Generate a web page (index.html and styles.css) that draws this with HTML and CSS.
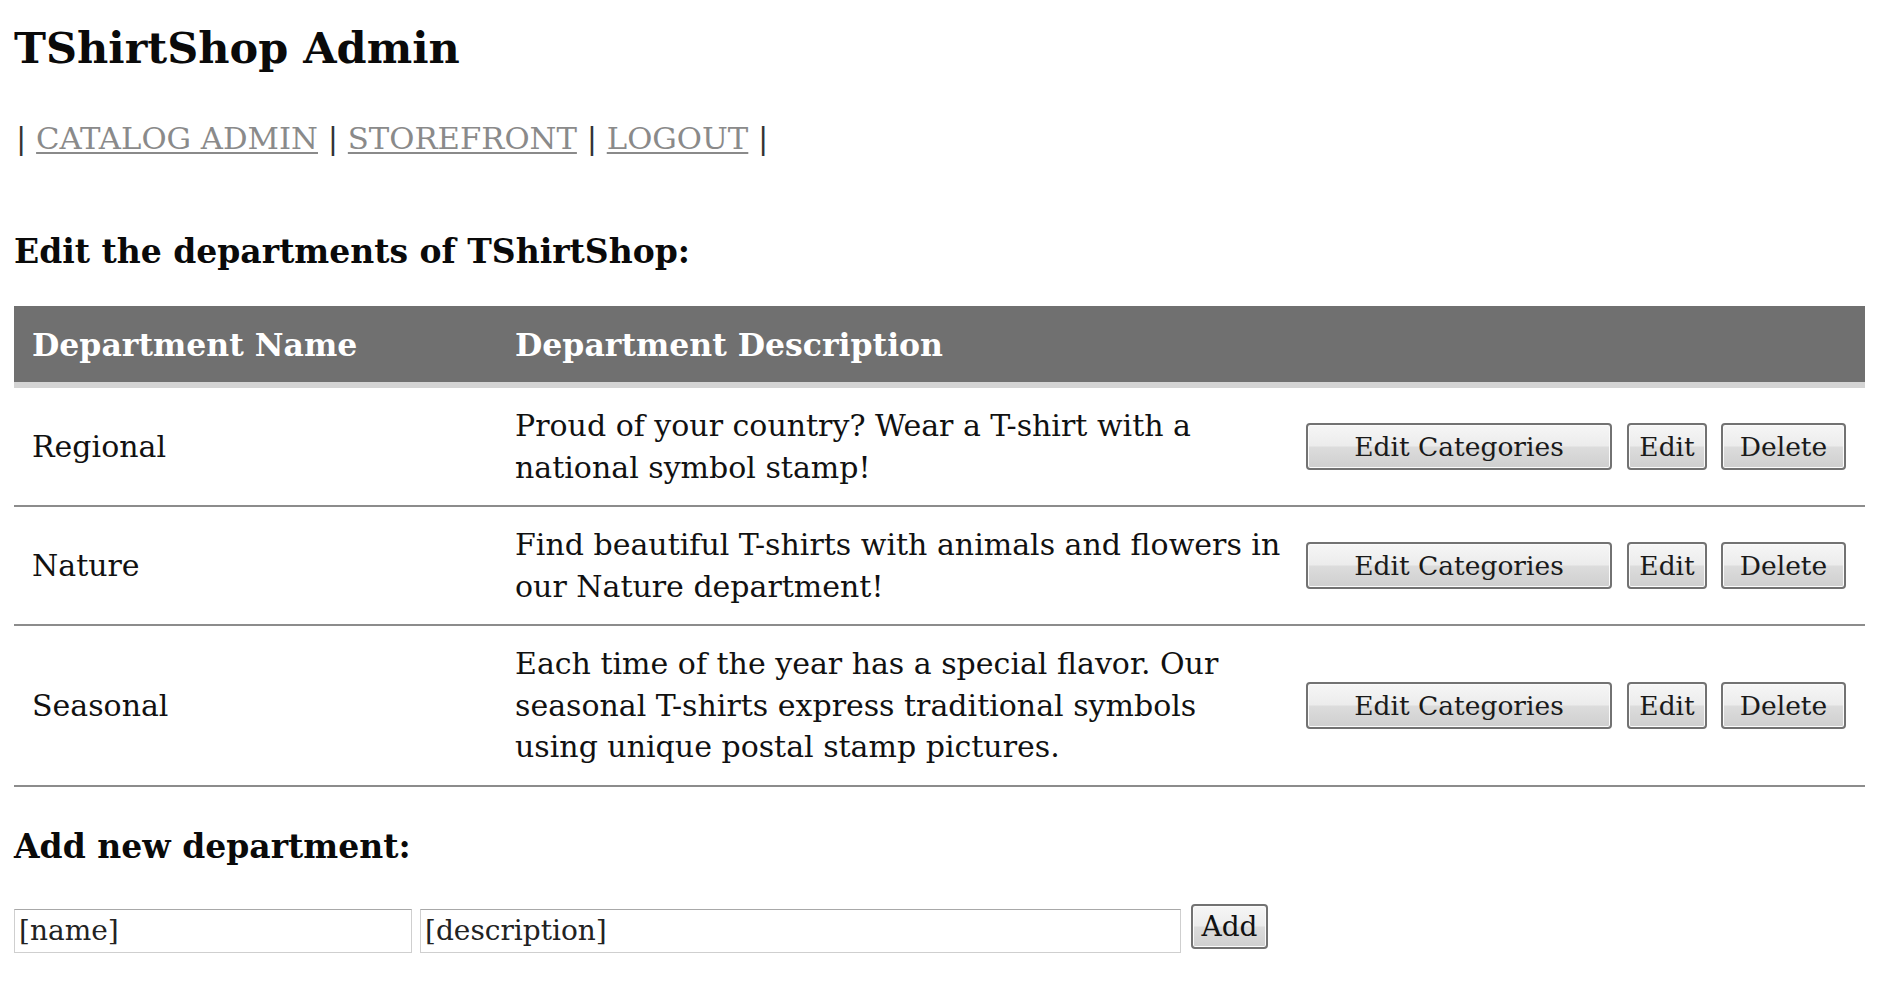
FILE: index.html
```html
<!DOCTYPE html>
<html>
<head>
<meta charset="utf-8">
<title>TShirtShop Admin</title>
<link rel="stylesheet" href="styles.css">
</head>
<body>
<h1 class="title">TShirtShop Admin</h1>
<p class="nav">| <a href="#">CATALOG ADMIN</a> | <a href="#">STOREFRONT</a> | <a href="#">LOGOUT</a> |</p>
<h2 class="section">Edit the departments of TShirtShop:</h2>
<table class="grid">
  <thead>
    <tr>
      <th class="c-name">Department Name</th>
      <th class="c-desc">Department Description</th>
      <th class="c-act"></th>
    </tr>
  </thead>
  <tbody>
    <tr>
      <td class="c-name">Regional</td>
      <td class="c-desc">Proud of your country? Wear a T-shirt with a national symbol stamp!</td>
      <td class="c-act"><button class="btn btn-cat">Edit Categories</button><button class="btn btn-edit">Edit</button><button class="btn btn-del">Delete</button></td>
    </tr>
    <tr>
      <td class="c-name">Nature</td>
      <td class="c-desc">Find beautiful T-shirts with animals and flowers in our Nature department!</td>
      <td class="c-act"><button class="btn btn-cat">Edit Categories</button><button class="btn btn-edit">Edit</button><button class="btn btn-del">Delete</button></td>
    </tr>
    <tr>
      <td class="c-name">Seasonal</td>
      <td class="c-desc">Each time of the year has a special flavor. Our seasonal T-shirts express traditional symbols using unique postal stamp pictures.</td>
      <td class="c-act"><button class="btn btn-cat">Edit Categories</button><button class="btn btn-edit">Edit</button><button class="btn btn-del">Delete</button></td>
    </tr>
  </tbody>
</table>
<h2 class="section add-title">Add new department:</h2>
<form class="add-form">
  <input class="field field-name" type="text" value="[name]">
  <input class="field field-desc" type="text" value="[description]">
  <button class="btn btn-add" type="button">Add</button>
</form>
</body>
</html>
```
FILE: styles.css
```css
html, body {
  background: #ffffff;
}
body {
  margin: 0;
  padding: 24px 19px 0 14px;
  font-family: "DejaVu Serif", "Liberation Serif", serif;
  font-size: 30px;
  line-height: 41.5px;
  color: #111111;
}
.title {
  margin: 0;
  font-size: 43px;
  line-height: 48px;
  font-weight: bold;
  color: #0a0a0a;
}
.nav {
  margin: 46px 0 0 2px;
  font-size: 30.7px;
  line-height: 41px;
  color: #333333;
}
.nav a {
  color: #8a8a8a;
  text-decoration: underline;
  text-decoration-thickness: 2px;
  text-underline-offset: 3px;
}
.section {
  margin: 72px 0 0 0;
  font-size: 33px;
  line-height: 41px;
  font-weight: bold;
  color: #0a0a0a;
}
.grid {
  margin-top: 34px;
  width: 1851px;
  border-collapse: collapse;
  table-layout: fixed;
}
.grid th {
  background: #707070;
  color: #ffffff;
  font-size: 31.5px;
  font-weight: bold;
  text-align: left;
  padding: 18px 18px 17px 18px;
  line-height: 41px;
  border-bottom: 6px solid #d4d4d4;
}
.grid td {
  padding: 17px 18px 17px 18px;
  vertical-align: middle;
  border-bottom: 2px solid #8c8c8c;
}
.c-name {
  width: 447px;
}
.c-desc {
  width: 768px;
}
.grid td.c-act {
  text-align: right;
  padding-left: 0;
  padding-right: 19px;
  white-space: nowrap;
}
.btn {
  font-family: "DejaVu Serif", "Liberation Serif", serif;
  font-size: 26.5px;
  color: #1a1a1a;
  height: 47px;
  padding: 0;
  border: 2px solid #727272;
  border-radius: 4px;
  background: linear-gradient(to bottom, #f6f6f6 0%, #ececec 48%, #dcdcdc 52%, #cfcfcf 100%);
  box-shadow: inset 0 0 0 1px #fbfbfb;
  vertical-align: middle;
}
.btn-cat {
  width: 306px;
}
.btn-edit {
  width: 80px;
  margin-left: 15px;
}
.btn-del {
  width: 125px;
  margin-left: 14px;
}
.add-title {
  margin-top: 39px;
}
.add-form {
  margin: 37px 0 0 0;
  display: flex;
  align-items: flex-start;
}
.field {
  box-sizing: border-box;
  height: 44px;
  margin: 5px 0 0 0;
  padding: 0 4px;
  font-family: "DejaVu Serif", "Liberation Serif", serif;
  font-size: 28px;
  color: #222222;
  background: #ffffff;
  border: 1px solid #cfcfcf;
  border-top-color: #a8a8a8;
}
.field-name {
  width: 398px;
}
.field-desc {
  width: 761px;
  margin-left: 8px;
}
.btn-add {
  width: 77px;
  height: 45px;
  margin-left: 10px;
  font-size: 28px;
  color: #111111;
}
```
